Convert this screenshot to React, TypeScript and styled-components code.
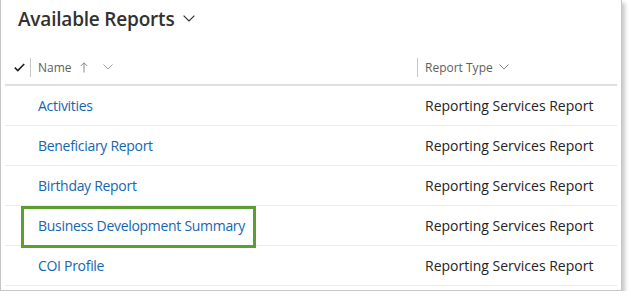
import React from 'react';
import styled, { createGlobalStyle } from 'styled-components';

const GlobalStyle = createGlobalStyle`
  html, body {
    margin: 0;
    padding: 0;
    background: #fff;
    font-family: 'Open Sans', 'Noto Sans', sans-serif;
  }
`;

const Frame = styled.div`
  width: 622px;
  height: 291px;
  border: 1px solid #c6c6c6;
  border-top: none;
  box-shadow: 3px 3px 4px rgba(0, 0, 0, 0.22);
  padding: 0 4px 0 4px;
  box-sizing: border-box;
  background: #fff;
`;

const TitleBar = styled.div`
  height: 50px;
  display: flex;
  align-items: flex-start;
  padding: 6px 0 0 13px;
  box-sizing: border-box;
`;

const Title = styled.h1`
  margin: 0;
  font-size: 19px;
  font-weight: 600;
  color: #323130;
  display: flex;
  align-items: center;
  gap: 9px;
  letter-spacing: -0.2px;
`;

const HeaderRow = styled.div`
  height: 36px;
  display: grid;
  grid-template-columns: 25px 387px 1fr;
  align-items: center;
  border-bottom: 2px solid #e1dfdd;
  box-sizing: border-box;
`;

const CheckCell = styled.div`
  display: flex;
  justify-content: center;
  padding-left: 4px;
`;

const HeaderCell = styled.div`
  display: flex;
  align-items: center;
  height: 19px;
  border-left: 1px solid #c8c6c4;
  padding-left: 7px;
  font-size: 12px;
  color: #605e5c;
  gap: 6px;
`;

const SortArrow = styled.svg`
  margin: 0 9px 0 2px;
`;

const Row = styled.div`
  position: relative;
  height: 40px;
  display: grid;
  grid-template-columns: 33px 387px 1fr;
  align-items: center;
  border-bottom: 1px solid #edebe9;
  box-sizing: border-box;
  font-size: 14px;
`;

const NameLink = styled.a`
  grid-column: 2;
  color: #1466b0;
  text-decoration: none;
  letter-spacing: -0.3px;
`;

const TypeCell = styled.div`
  grid-column: 3;
  color: #252423;
`;

const Highlight = styled.div`
  position: absolute;
  left: 16px;
  top: 0;
  width: 235px;
  height: 42px;
  border: 3px solid #5c9e31;
  box-sizing: border-box;
  pointer-events: none;
`;

const Chevron = ({ size = 10, color = '#605e5c' }: { size?: number; color?: string }) => (
  <svg width={size} height={size * 0.6} viewBox="0 0 10 6" fill="none">
    <path d="M0.5 0.5 L5 5 L9.5 0.5" stroke={color} strokeWidth="1" />
  </svg>
);

const reports = [
  'Activities',
  'Beneficiary Report',
  'Birthday Report',
  'Business Development Summary',
  'COI Profile',
];

const App = () => (
  <>
    <GlobalStyle />
    <Frame>
      <TitleBar>
        <Title>
          Available Reports
          <Chevron size={12} color="#323130" />
        </Title>
      </TitleBar>
      <HeaderRow>
        <CheckCell>
          <svg width="11" height="9" viewBox="0 0 11 9" fill="none">
            <path d="M0.8 4.6 L3.8 7.6 L10.2 1" stroke="#201f1e" strokeWidth="1.6" />
          </svg>
        </CheckCell>
        <HeaderCell>
          Name
          <SortArrow width="8" height="11" viewBox="0 0 8 11" fill="none">
            <path d="M4 10.5 V1 M0.8 4 L4 0.8 L7.2 4" stroke="#8a8886" strokeWidth="1" />
          </SortArrow>
          <Chevron size={10} color="#a19f9d" />
        </HeaderCell>
        <HeaderCell>
          Report Type
          <Chevron size={10} color="#8a8886" />
        </HeaderCell>
      </HeaderRow>
      {reports.map((name) => (
        <Row key={name}>
          <NameLink href="#">{name}</NameLink>
          <TypeCell>Reporting Services Report</TypeCell>
          {name === 'Business Development Summary' && <Highlight />}
        </Row>
      ))}
    </Frame>
  </>
);

export default App;
